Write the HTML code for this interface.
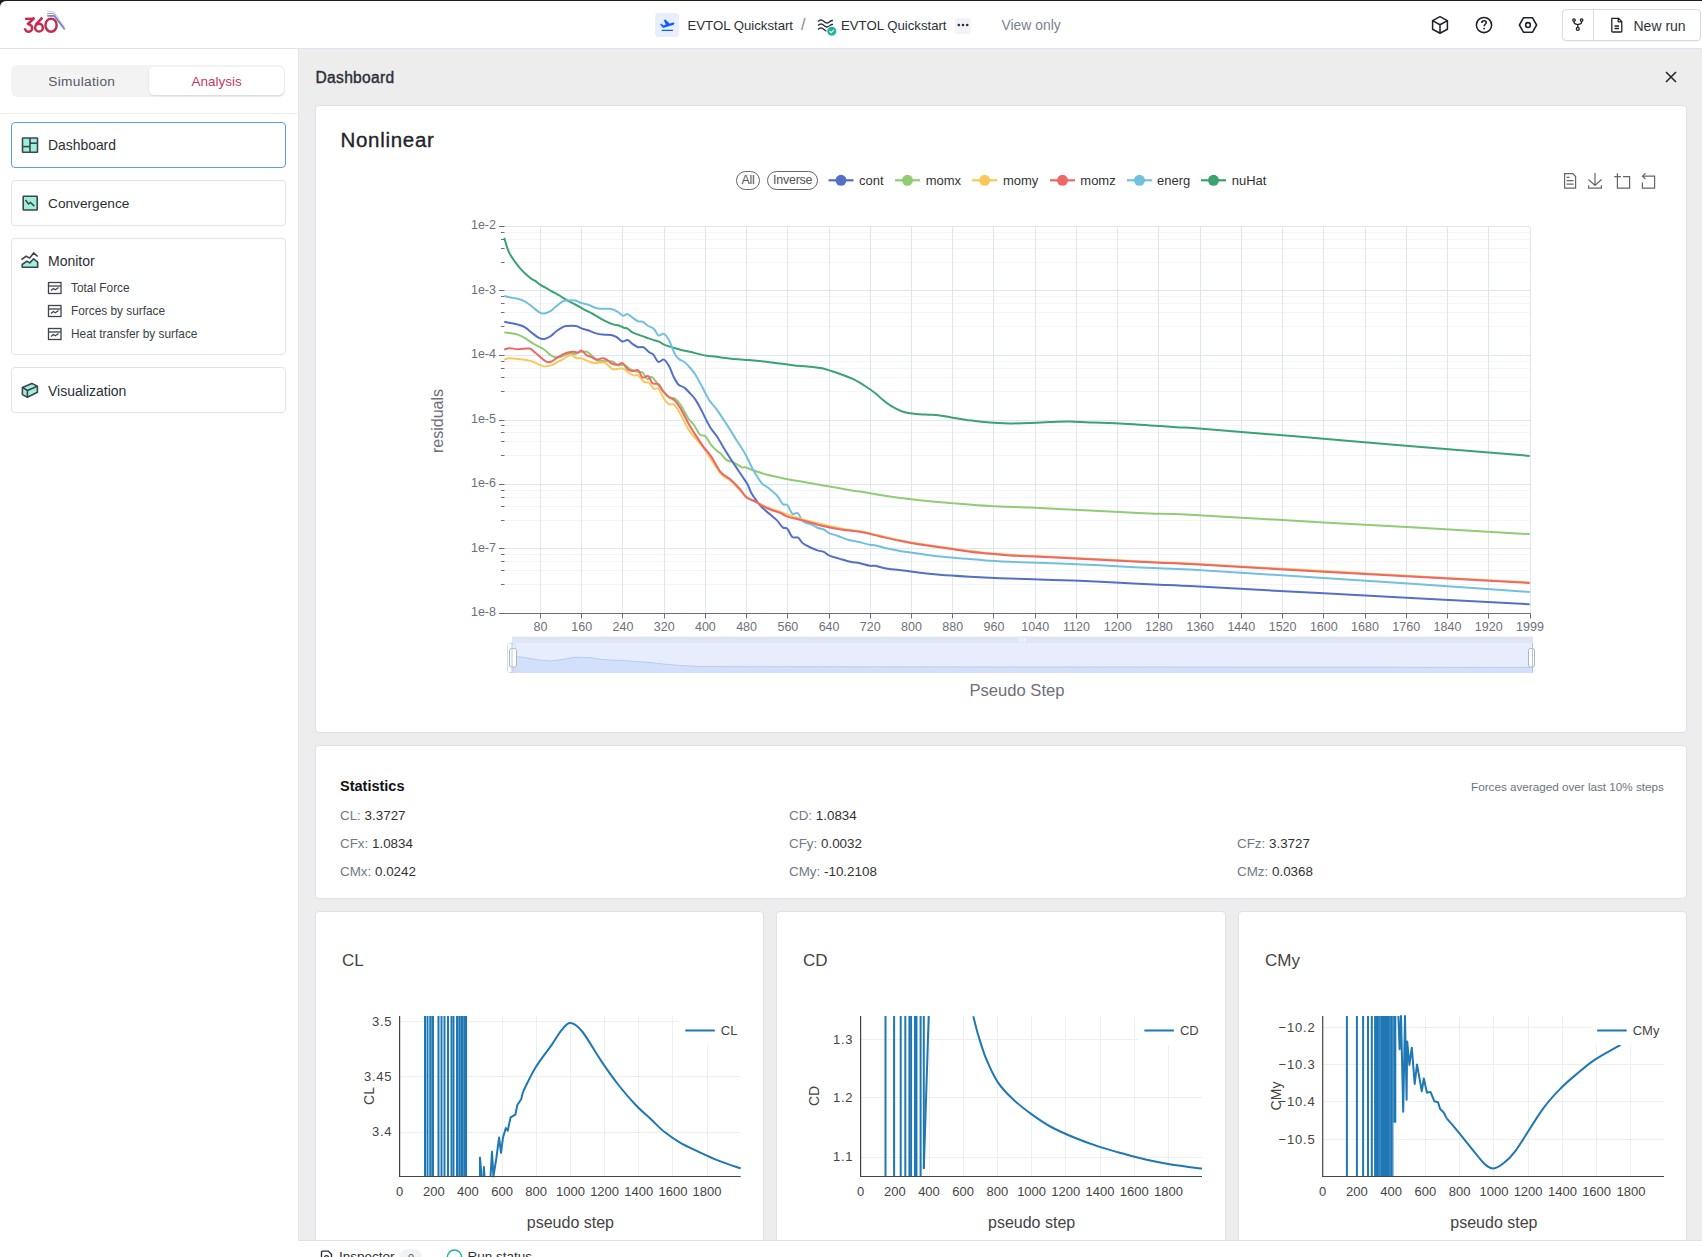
<!DOCTYPE html>
<html><head><meta charset="utf-8">
<style>
*{box-sizing:border-box;margin:0;padding:0}
html,body{width:1702px;height:1257px;overflow:hidden;background:#fff;font-family:"Liberation Sans",sans-serif;color:#2b2f36}
.a{position:absolute}
.t{position:absolute;white-space:nowrap;line-height:1}
svg{position:absolute;overflow:visible}
.card{position:absolute;background:#fff;border:1px solid #dfe1e8;border-radius:4px}
.nav{position:absolute;left:11px;width:275px;background:#fff;border:1px solid #e1e3ea;border-radius:4px}
</style></head><body>
<!-- window frame top -->
<div class="a" style="left:0;top:0;width:1702px;height:8px;background:#1e1e1e"></div>
<div class="a" style="left:0;top:1px;width:1702px;height:48px;background:#fff;border-top-left-radius:6px;border-bottom:1px solid #e2e4ea"></div>

<!-- logo -->
<svg style="left:0;top:0" width="80" height="48" viewBox="0 0 80 48">
 <g fill="none" stroke="#c62b50">
  <path d="M25.1,18.8 L34.3,18.8" stroke-width="2.4"/>
  <path d="M34.4,17.7 L27.2,24.8" stroke-width="2.6"/>
  <path d="M28.8,24.5 A3.6,3.6 0 1 1 25.0,28.3" stroke-width="2.5"/>
  <circle cx="39" cy="27.7" r="3.85" stroke-width="2.5"/>
  <path d="M42.3,17.6 L35.7,24.9" stroke-width="2.6"/>
  <ellipse cx="51.05" cy="25.2" rx="5.6" ry="6.55" stroke-width="2.45"/>
 </g>
 <path d="M47.2,11.7 L53.6,11.7 L64.8,27.5" fill="none" stroke="#e7b3c6" stroke-width="0.9"/>
 <path d="M47.2,13.5 L53.6,13.5 L64.6,28.6" fill="none" stroke="#a58fc4" stroke-width="1"/>
 <path d="M47.2,15.9 L54.2,15.9 L64.7,29.6" fill="none" stroke="#6c8bd0" stroke-width="1.6"/>
</svg>

<!-- breadcrumb -->
<div class="a" style="left:655px;top:13px;width:24px;height:24px;background:#e7effd;border-radius:4px"></div>
<svg style="left:655px;top:13px" width="24" height="24" viewBox="0 0 24 24">
 <path d="M5.3,11.4 L6.4,10.9 L8.3,12.5 L11.1,11.7 L9.0,7.2 L10.4,6.8 L14.6,10.7 L17.8,9.8 C18.9,9.6 19.5,10.3 19.0,11.0 C18.7,11.6 17.9,11.9 17.2,12.1 L8.1,14.7 Z" fill="#0f5bff" stroke="#0f5bff" stroke-width="0.4" stroke-linejoin="round"/>
 <path d="M7.2,17.4 L17.4,17.4" stroke="#0f5bff" stroke-width="1.4" stroke-linecap="round"/>
</svg>
<div class="t" style="left:687.5px;top:18.7px;font-size:13.2px;color:#2b2f36">EVTOL Quickstart</div>
<div class="t" style="left:801px;top:17px;font-size:16px;color:#7f8796">/</div>
<svg style="left:815px;top:14px" width="26" height="26" viewBox="0 0 26 26">
 <path d="M3,7.5 C5,5.5 7,5.5 9,7.5 C11,9.5 13,9.5 15,7.5 C16,6.5 17,6.3 18,6.5" fill="none" stroke="#2b2f36" stroke-width="1.4"/>
 <path d="M3,11.5 C5,9.5 7,9.5 9,11.5 C11,13.5 13,13.5 15,11.5 C16,10.5 17,10.3 18,10.5" fill="none" stroke="#2b2f36" stroke-width="1.4"/>
 <path d="M3,15.5 C5,13.5 7,13.5 9,15.5 C10,16.5 11,17 12,17" fill="none" stroke="#2b2f36" stroke-width="1.4"/>
 <circle cx="16.8" cy="17.2" r="5" fill="#1fb39b" stroke="#fff" stroke-width="1"/>
 <path d="M14.6,17.2 L16.2,18.7 L19,15.8" fill="none" stroke="#fff" stroke-width="1.1"/>
</svg>
<div class="t" style="left:841px;top:18.7px;font-size:13.2px;color:#2b2f36">EVTOL Quickstart</div>
<div class="a" style="left:955px;top:17.5px;width:16px;height:16px;background:#f2f3f5;border-radius:3px"></div>
<svg style="left:955px;top:17px" width="16" height="16" viewBox="0 0 16 16">
 <circle cx="3.8" cy="8" r="1.3" fill="#2b2f36"/><circle cx="8" cy="8" r="1.3" fill="#2b2f36"/><circle cx="12.2" cy="8" r="1.3" fill="#2b2f36"/>
</svg>
<div class="t" style="left:1001.5px;top:19px;font-size:13.9px;color:#7b8190">View only</div>

<!-- top right icons -->
<svg style="left:1420px;top:8px" width="130" height="34" viewBox="1420 8 130 34">
 <g fill="none" stroke="#1f2329" stroke-width="1.55" stroke-linejoin="round">
  <path d="M1440,16.6 L1447.4,20.6 L1447.4,29.3 L1440,33.3 L1432.6,29.3 L1432.6,20.6 Z M1432.6,20.6 L1440,24.7 L1447.4,20.6 M1440,24.7 L1440,33.3"/>
  <circle cx="1484" cy="25" r="7.6"/>
  <path d="M1481.8,22.9 C1481.8,21.5 1482.8,20.8 1484,20.8 C1485.3,20.8 1486.2,21.6 1486.2,22.7 C1486.2,24.2 1484.1,24.3 1484.1,26.3"/>
  <path d="M1523.6,17.7 L1532.4,17.7 L1536.6,25 L1532.4,32.3 L1523.6,32.3 L1519.4,25 Z"/>
  <circle cx="1528" cy="25" r="2.4"/>
 </g>
 <circle cx="1484.1" cy="28.6" r="0.95" fill="#1f2329"/>
</svg>
<div class="a" style="left:1562px;top:9px;width:139px;height:32px;border:1px solid #dadada;border-radius:4px;background:#fff;box-shadow:0 1px 1px rgba(0,0,0,0.04)"></div>
<div class="a" style="left:1593px;top:10px;width:1px;height:30px;background:#dedede"></div>
<svg style="left:1566px;top:14px" width="24" height="22" viewBox="1566 14 24 22">
 <g fill="none" stroke="#1f2329" stroke-width="1.3">
  <circle cx="1574" cy="20.1" r="1.25"/>
  <circle cx="1581.6" cy="20.1" r="1.25"/>
  <circle cx="1577.8" cy="28.9" r="1.45"/>
  <path d="M1574,21.4 L1574,22.3 C1574,23.6 1575,24.2 1577.8,24.7 C1580.6,24.2 1581.6,23.6 1581.6,22.3 L1581.6,21.4 M1577.8,24.7 L1577.8,27.4"/>
 </g>
</svg>
<svg style="left:1607px;top:15px" width="20" height="20" viewBox="0 0 20 20">
 <path d="M4.8,3.3 L11.5,3.3 L14.8,6.6 L14.8,16.2 C14.8,16.7 14.4,17 13.9,17 L5.7,17 C5.2,17 4.8,16.7 4.8,16.2 Z M11.2,3.5 L11.2,6.8 L14.6,6.8 M7.5,11 L12,11 M7.5,13.5 L12,13.5" fill="none" stroke="#1f2329" stroke-width="1.3" stroke-linejoin="round"/>
</svg>
<div class="t" style="left:1633.5px;top:18.5px;font-size:14px;color:#2f3338">New run</div>

<!-- sidebar -->
<div class="a" style="left:0;top:49px;width:299px;height:1208px;background:#fff;border-right:1px solid #e2e4ea"></div>
<div class="a" style="left:11px;top:65px;width:274px;height:32px;background:#f3f3f3;border-radius:6px"></div>
<div class="a" style="left:149px;top:67px;width:135px;height:28px;background:#fff;border-radius:5px;box-shadow:0 1px 2px rgba(0,0,0,0.12)"></div>
<div class="t" style="left:48.3px;top:74.5px;font-size:13.7px;letter-spacing:0.3px;color:#555a63">Simulation</div>
<div class="t" style="left:191.5px;top:75px;font-size:13.5px;color:#c23a62">Analysis</div>
<div class="a" style="left:0;top:113px;width:298px;height:1px;background:#ececec"></div>

<div class="nav" style="top:122px;height:46px;border-color:#5f9bf2"></div>
<div class="nav" style="top:180px;height:46px"></div>
<div class="nav" style="top:238px;height:117px"></div>
<div class="nav" style="top:367px;height:46px"></div>

<svg style="left:0;top:120px" width="60" height="300" viewBox="0 120 60 300">
 <!-- dashboard icon -->
 <rect x="22.5" y="138" width="15" height="14.3" fill="#9cf0dc" stroke="#3f444d" stroke-width="1.6" rx="0.5"/>
 <line x1="30" y1="138" x2="30" y2="152.3" stroke="#3f444d" stroke-width="1.6"/>
 <line x1="22.5" y1="146.6" x2="30" y2="146.6" stroke="#3f444d" stroke-width="1.6"/>
 <line x1="30" y1="143.2" x2="37.5" y2="143.2" stroke="#3f444d" stroke-width="1.6"/>
 <!-- convergence icon -->
 <rect x="23.2" y="196.2" width="14" height="13.8" fill="#9cf0dc" stroke="#3f444d" stroke-width="1.6" rx="0.5"/>
 <path d="M25.5,200 L28.5,204 L30.5,202.4 L34.3,206.1" fill="none" stroke="#3f444d" stroke-width="1.5"/>
 <!-- monitor icon -->
 <path d="M22.2,267.3 L22.2,264.5 L26.9,261.2 L29.7,262.9 L33.7,258.8 L37.7,262.1 L37.7,267.3 Z" fill="#9cf0dc" stroke="#3f444d" stroke-width="1.6" stroke-linejoin="round"/>
 <path d="M21.4,259.7 L26.1,256.3 L29.7,258.1 L33.7,253 L37.7,256.5" fill="none" stroke="#3f444d" stroke-width="1.6" stroke-linejoin="miter"/>
 <!-- sub icons -->
 <g fill="none" stroke="#3f444d" stroke-width="1.3">
  <rect x="48.5" y="282.5" width="12.5" height="11"/><line x1="48.5" y1="286" x2="61" y2="286"/><path d="M51,290.5 L53.3,288.5 L55.3,289.8 L58.5,287.5"/>
  <rect x="48.5" y="305.5" width="12.5" height="11"/><line x1="48.5" y1="309" x2="61" y2="309"/><path d="M51,313.5 L53.3,311.5 L55.3,312.8 L58.5,310.5"/>
  <rect x="48.5" y="328.5" width="12.5" height="11"/><line x1="48.5" y1="332" x2="61" y2="332"/><path d="M51,336.5 L53.3,334.5 L55.3,335.8 L58.5,333.5"/>
 </g>
 <!-- visualization icon -->
 <path d="M22.4,387.4 L31.9,383.4 L37.4,386.2 L37.4,392.2 L27.4,397.2 L22.4,394.6 Z" fill="#9cf0dc" stroke="#3f444d" stroke-width="1.6" stroke-linejoin="round"/>
 <path d="M22.4,387.4 L27.4,390.5 L37.4,386.2 M27.4,390.5 L27.4,397.2" fill="none" stroke="#3f444d" stroke-width="1.6" stroke-linejoin="round"/>
</svg>
<div class="t" style="left:48px;top:138.5px;font-size:13.9px;color:#2b2f36">Dashboard</div>
<div class="t" style="left:48px;top:196.5px;font-size:13.7px;color:#2b2f36">Convergence</div>
<div class="t" style="left:48px;top:253.5px;font-size:14px;color:#2b2f36">Monitor</div>
<div class="t" style="left:71px;top:283px;font-size:11.85px;color:#3a3f47">Total Force</div>
<div class="t" style="left:71px;top:306px;font-size:11.85px;color:#3a3f47">Forces by surface</div>
<div class="t" style="left:71px;top:329px;font-size:11.85px;color:#3a3f47">Heat transfer by surface</div>
<div class="t" style="left:48px;top:383.5px;font-size:14px;color:#2b2f36">Visualization</div>

<!-- main -->
<div class="a" style="left:299px;top:49px;width:1403px;height:1208px;background:#ededed"></div>
<div class="t" style="left:315.5px;top:70px;font-size:15.6px;letter-spacing:0.3px;-webkit-text-stroke:0.4px #2b2f36;color:#2b2f36">Dashboard</div>
<svg style="left:1660px;top:66px" width="22" height="22" viewBox="0 0 22 22">
 <path d="M6,6 L16,16 M16,6 L6,16" stroke="#1f2329" stroke-width="1.5"/>
</svg>

<div class="card" style="left:315px;top:105px;width:1372px;height:628px"></div>
<div class="t" style="left:340.5px;top:129.5px;font-size:20.5px;letter-spacing:0.7px;-webkit-text-stroke:0.35px #1f2329;color:#1f2329">Nonlinear</div>

<!-- legend -->
<div class="a" style="left:736px;top:171px;width:24px;height:19px;border:1px solid #666;border-radius:10px"></div>
<div class="t" style="left:741.5px;top:173.5px;font-size:12.5px;color:#555;letter-spacing:-0.3px">All</div>
<div class="a" style="left:767px;top:171px;width:51px;height:19px;border:1px solid #666;border-radius:10px"></div>
<div class="t" style="left:773px;top:173.5px;font-size:12.5px;color:#555;letter-spacing:-0.25px">Inverse</div>
<svg style="left:820px;top:170px" width="460" height="20" viewBox="820 170 460 20">
 <g stroke-width="2.2">
  <line x1="828.5" y1="180.3" x2="853.5" y2="180.3" stroke="#5470c6"/><circle cx="841" cy="180.3" r="5.5" fill="#5470c6" stroke="none"/>
  <line x1="895" y1="180.3" x2="920" y2="180.3" stroke="#91cc75"/><circle cx="907.5" cy="180.3" r="5.5" fill="#91cc75" stroke="none"/>
  <line x1="972.2" y1="180.3" x2="997.2" y2="180.3" stroke="#fac858"/><circle cx="984.7" cy="180.3" r="5.5" fill="#fac858" stroke="none"/>
  <line x1="1050" y1="180.3" x2="1075" y2="180.3" stroke="#ee6666"/><circle cx="1062.5" cy="180.3" r="5.5" fill="#ee6666" stroke="none"/>
  <line x1="1127" y1="180.3" x2="1152" y2="180.3" stroke="#73c0de"/><circle cx="1139.5" cy="180.3" r="5.5" fill="#73c0de" stroke="none"/>
  <line x1="1201" y1="180.3" x2="1226" y2="180.3" stroke="#3ba272"/><circle cx="1213.5" cy="180.3" r="5.5" fill="#3ba272" stroke="none"/>
 </g>
 <g font-size="13" fill="#333" font-family="Liberation Sans">
  <text x="859" y="184.5">cont</text>
  <text x="925.7" y="184.5">momx</text>
  <text x="1002.9" y="184.5">momy</text>
  <text x="1080.3" y="184.5">momz</text>
  <text x="1157" y="184.5">energ</text>
  <text x="1231.7" y="184.5">nuHat</text>
 </g>
</svg>
<!-- toolbox -->
<svg style="left:1556px;top:166px" width="110" height="30" viewBox="1556 166 110 30">
 <g fill="none" stroke="#666" stroke-width="1.2">
  <path d="M1564.6,173.6 L1572.8,173.6 L1575.6,176.6 L1575.6,188.2 L1564.6,188.2 Z"/>
  <path d="M1566.6,177.4 L1569.6,177.4 M1566.6,180.7 L1573.6,180.7 M1566.6,184.2 L1573.6,184.2" stroke-width="1.3"/>
  <path d="M1595,173 L1595,185.5 M1588.5,179.5 L1595,185.5 L1601.5,179.5 M1588.6,185.2 L1588.6,188.2 L1601.4,188.2 L1601.4,185.2"/>
  <path d="M1614.2,176.6 L1621,176.6 M1617.4,173.3 L1617.4,188.2 L1629.6,188.2 L1629.6,176.6 L1623,176.6"/>
  <path d="M1645.5,173.2 L1642.5,176.2 L1645.5,179.2 M1642.5,176.2 L1654.6,176.2 L1654.6,188.2 L1642.4,188.2 L1642.4,182.4"/>
 </g>
</svg>

<svg style="left:0;top:0" width="1702" height="1257" viewBox="0 0 1702 1257" font-family="Liberation Sans">
<line x1="499" y1="262.5" x2="1530" y2="262.5" stroke="#f3f5fa" stroke-width="1"/>
<line x1="499" y1="248.5" x2="1530" y2="248.5" stroke="#f3f5fa" stroke-width="1"/>
<line x1="499" y1="239.5" x2="1530" y2="239.5" stroke="#f3f5fa" stroke-width="1"/>
<line x1="499" y1="232.5" x2="1530" y2="232.5" stroke="#f3f5fa" stroke-width="1"/>
<line x1="499" y1="326.5" x2="1530" y2="326.5" stroke="#f3f5fa" stroke-width="1"/>
<line x1="499" y1="312.5" x2="1530" y2="312.5" stroke="#f3f5fa" stroke-width="1"/>
<line x1="499" y1="303.5" x2="1530" y2="303.5" stroke="#f3f5fa" stroke-width="1"/>
<line x1="499" y1="296.5" x2="1530" y2="296.5" stroke="#f3f5fa" stroke-width="1"/>
<line x1="499" y1="391.5" x2="1530" y2="391.5" stroke="#f3f5fa" stroke-width="1"/>
<line x1="499" y1="377.5" x2="1530" y2="377.5" stroke="#f3f5fa" stroke-width="1"/>
<line x1="499" y1="368.5" x2="1530" y2="368.5" stroke="#f3f5fa" stroke-width="1"/>
<line x1="499" y1="361.5" x2="1530" y2="361.5" stroke="#f3f5fa" stroke-width="1"/>
<line x1="499" y1="455.5" x2="1530" y2="455.5" stroke="#f3f5fa" stroke-width="1"/>
<line x1="499" y1="441.5" x2="1530" y2="441.5" stroke="#f3f5fa" stroke-width="1"/>
<line x1="499" y1="432.5" x2="1530" y2="432.5" stroke="#f3f5fa" stroke-width="1"/>
<line x1="499" y1="425.5" x2="1530" y2="425.5" stroke="#f3f5fa" stroke-width="1"/>
<line x1="499" y1="520.5" x2="1530" y2="520.5" stroke="#f3f5fa" stroke-width="1"/>
<line x1="499" y1="506.5" x2="1530" y2="506.5" stroke="#f3f5fa" stroke-width="1"/>
<line x1="499" y1="497.5" x2="1530" y2="497.5" stroke="#f3f5fa" stroke-width="1"/>
<line x1="499" y1="490.5" x2="1530" y2="490.5" stroke="#f3f5fa" stroke-width="1"/>
<line x1="499" y1="584.5" x2="1530" y2="584.5" stroke="#f3f5fa" stroke-width="1"/>
<line x1="499" y1="570.5" x2="1530" y2="570.5" stroke="#f3f5fa" stroke-width="1"/>
<line x1="499" y1="561.5" x2="1530" y2="561.5" stroke="#f3f5fa" stroke-width="1"/>
<line x1="499" y1="554.5" x2="1530" y2="554.5" stroke="#f3f5fa" stroke-width="1"/>
<line x1="499" y1="226.5" x2="1530" y2="226.5" stroke="#e0e6f1" stroke-width="1"/>
<line x1="499" y1="290.5" x2="1530" y2="290.5" stroke="#e0e6f1" stroke-width="1"/>
<line x1="499" y1="355.5" x2="1530" y2="355.5" stroke="#e0e6f1" stroke-width="1"/>
<line x1="499" y1="420.5" x2="1530" y2="420.5" stroke="#e0e6f1" stroke-width="1"/>
<line x1="499" y1="484.5" x2="1530" y2="484.5" stroke="#e0e6f1" stroke-width="1"/>
<line x1="499" y1="548.5" x2="1530" y2="548.5" stroke="#e0e6f1" stroke-width="1"/>
<line x1="499" y1="613.5" x2="1530" y2="613.5" stroke="#e0e6f1" stroke-width="1"/>
<line x1="540.5" y1="226.5" x2="540.5" y2="613" stroke="#e0e6f1" stroke-width="1"/>
<line x1="581.5" y1="226.5" x2="581.5" y2="613" stroke="#e0e6f1" stroke-width="1"/>
<line x1="622.5" y1="226.5" x2="622.5" y2="613" stroke="#e0e6f1" stroke-width="1"/>
<line x1="664.5" y1="226.5" x2="664.5" y2="613" stroke="#e0e6f1" stroke-width="1"/>
<line x1="705.5" y1="226.5" x2="705.5" y2="613" stroke="#e0e6f1" stroke-width="1"/>
<line x1="746.5" y1="226.5" x2="746.5" y2="613" stroke="#e0e6f1" stroke-width="1"/>
<line x1="787.5" y1="226.5" x2="787.5" y2="613" stroke="#e0e6f1" stroke-width="1"/>
<line x1="829.5" y1="226.5" x2="829.5" y2="613" stroke="#e0e6f1" stroke-width="1"/>
<line x1="870.5" y1="226.5" x2="870.5" y2="613" stroke="#e0e6f1" stroke-width="1"/>
<line x1="911.5" y1="226.5" x2="911.5" y2="613" stroke="#e0e6f1" stroke-width="1"/>
<line x1="952.5" y1="226.5" x2="952.5" y2="613" stroke="#e0e6f1" stroke-width="1"/>
<line x1="993.5" y1="226.5" x2="993.5" y2="613" stroke="#e0e6f1" stroke-width="1"/>
<line x1="1035.5" y1="226.5" x2="1035.5" y2="613" stroke="#e0e6f1" stroke-width="1"/>
<line x1="1076.5" y1="226.5" x2="1076.5" y2="613" stroke="#e0e6f1" stroke-width="1"/>
<line x1="1117.5" y1="226.5" x2="1117.5" y2="613" stroke="#e0e6f1" stroke-width="1"/>
<line x1="1158.5" y1="226.5" x2="1158.5" y2="613" stroke="#e0e6f1" stroke-width="1"/>
<line x1="1200.5" y1="226.5" x2="1200.5" y2="613" stroke="#e0e6f1" stroke-width="1"/>
<line x1="1241.5" y1="226.5" x2="1241.5" y2="613" stroke="#e0e6f1" stroke-width="1"/>
<line x1="1282.5" y1="226.5" x2="1282.5" y2="613" stroke="#e0e6f1" stroke-width="1"/>
<line x1="1323.5" y1="226.5" x2="1323.5" y2="613" stroke="#e0e6f1" stroke-width="1"/>
<line x1="1365.5" y1="226.5" x2="1365.5" y2="613" stroke="#e0e6f1" stroke-width="1"/>
<line x1="1406.5" y1="226.5" x2="1406.5" y2="613" stroke="#e0e6f1" stroke-width="1"/>
<line x1="1447.5" y1="226.5" x2="1447.5" y2="613" stroke="#e0e6f1" stroke-width="1"/>
<line x1="1488.5" y1="226.5" x2="1488.5" y2="613" stroke="#e0e6f1" stroke-width="1"/>
<line x1="1530.5" y1="226.5" x2="1530.5" y2="613" stroke="#e0e6f1" stroke-width="1"/>
<line x1="499" y1="226.5" x2="504.5" y2="226.5" stroke="#6e7079" stroke-width="1"/>
<line x1="501" y1="262.5" x2="504.5" y2="262.5" stroke="#6e7079" stroke-width="1"/>
<line x1="501" y1="248.5" x2="504.5" y2="248.5" stroke="#6e7079" stroke-width="1"/>
<line x1="501" y1="239.5" x2="504.5" y2="239.5" stroke="#6e7079" stroke-width="1"/>
<line x1="501" y1="232.5" x2="504.5" y2="232.5" stroke="#6e7079" stroke-width="1"/>
<text x="496" y="229.1" text-anchor="end" font-size="12.5" fill="#6e7079">1e-2</text>
<line x1="499" y1="290.5" x2="504.5" y2="290.5" stroke="#6e7079" stroke-width="1"/>
<line x1="501" y1="326.5" x2="504.5" y2="326.5" stroke="#6e7079" stroke-width="1"/>
<line x1="501" y1="312.5" x2="504.5" y2="312.5" stroke="#6e7079" stroke-width="1"/>
<line x1="501" y1="303.5" x2="504.5" y2="303.5" stroke="#6e7079" stroke-width="1"/>
<line x1="501" y1="296.5" x2="504.5" y2="296.5" stroke="#6e7079" stroke-width="1"/>
<text x="496" y="293.6" text-anchor="end" font-size="12.5" fill="#6e7079">1e-3</text>
<line x1="499" y1="355.5" x2="504.5" y2="355.5" stroke="#6e7079" stroke-width="1"/>
<line x1="501" y1="391.5" x2="504.5" y2="391.5" stroke="#6e7079" stroke-width="1"/>
<line x1="501" y1="377.5" x2="504.5" y2="377.5" stroke="#6e7079" stroke-width="1"/>
<line x1="501" y1="368.5" x2="504.5" y2="368.5" stroke="#6e7079" stroke-width="1"/>
<line x1="501" y1="361.5" x2="504.5" y2="361.5" stroke="#6e7079" stroke-width="1"/>
<text x="496" y="358.1" text-anchor="end" font-size="12.5" fill="#6e7079">1e-4</text>
<line x1="499" y1="420.5" x2="504.5" y2="420.5" stroke="#6e7079" stroke-width="1"/>
<line x1="501" y1="455.5" x2="504.5" y2="455.5" stroke="#6e7079" stroke-width="1"/>
<line x1="501" y1="441.5" x2="504.5" y2="441.5" stroke="#6e7079" stroke-width="1"/>
<line x1="501" y1="432.5" x2="504.5" y2="432.5" stroke="#6e7079" stroke-width="1"/>
<line x1="501" y1="425.5" x2="504.5" y2="425.5" stroke="#6e7079" stroke-width="1"/>
<text x="496" y="422.6" text-anchor="end" font-size="12.5" fill="#6e7079">1e-5</text>
<line x1="499" y1="484.5" x2="504.5" y2="484.5" stroke="#6e7079" stroke-width="1"/>
<line x1="501" y1="520.5" x2="504.5" y2="520.5" stroke="#6e7079" stroke-width="1"/>
<line x1="501" y1="506.5" x2="504.5" y2="506.5" stroke="#6e7079" stroke-width="1"/>
<line x1="501" y1="497.5" x2="504.5" y2="497.5" stroke="#6e7079" stroke-width="1"/>
<line x1="501" y1="490.5" x2="504.5" y2="490.5" stroke="#6e7079" stroke-width="1"/>
<text x="496" y="487.1" text-anchor="end" font-size="12.5" fill="#6e7079">1e-6</text>
<line x1="499" y1="548.5" x2="504.5" y2="548.5" stroke="#6e7079" stroke-width="1"/>
<line x1="501" y1="584.5" x2="504.5" y2="584.5" stroke="#6e7079" stroke-width="1"/>
<line x1="501" y1="570.5" x2="504.5" y2="570.5" stroke="#6e7079" stroke-width="1"/>
<line x1="501" y1="561.5" x2="504.5" y2="561.5" stroke="#6e7079" stroke-width="1"/>
<line x1="501" y1="554.5" x2="504.5" y2="554.5" stroke="#6e7079" stroke-width="1"/>
<text x="496" y="551.6" text-anchor="end" font-size="12.5" fill="#6e7079">1e-7</text>
<line x1="499" y1="613.5" x2="504.5" y2="613.5" stroke="#6e7079" stroke-width="1"/>
<text x="496" y="616.1" text-anchor="end" font-size="12.5" fill="#6e7079">1e-8</text>
<line x1="499" y1="613.5" x2="1530.5" y2="613.5" stroke="#6e7079" stroke-width="1"/>
<line x1="540.5" y1="613.5" x2="540.5" y2="618.5" stroke="#6e7079" stroke-width="1"/>
<text x="540.5" y="630.8" text-anchor="middle" font-size="12.5" fill="#6e7079">80</text>
<line x1="581.5" y1="613.5" x2="581.5" y2="618.5" stroke="#6e7079" stroke-width="1"/>
<text x="581.7" y="630.8" text-anchor="middle" font-size="12.5" fill="#6e7079">160</text>
<line x1="622.5" y1="613.5" x2="622.5" y2="618.5" stroke="#6e7079" stroke-width="1"/>
<text x="623.0" y="630.8" text-anchor="middle" font-size="12.5" fill="#6e7079">240</text>
<line x1="664.5" y1="613.5" x2="664.5" y2="618.5" stroke="#6e7079" stroke-width="1"/>
<text x="664.2" y="630.8" text-anchor="middle" font-size="12.5" fill="#6e7079">320</text>
<line x1="705.5" y1="613.5" x2="705.5" y2="618.5" stroke="#6e7079" stroke-width="1"/>
<text x="705.4" y="630.8" text-anchor="middle" font-size="12.5" fill="#6e7079">400</text>
<line x1="746.5" y1="613.5" x2="746.5" y2="618.5" stroke="#6e7079" stroke-width="1"/>
<text x="746.6" y="630.8" text-anchor="middle" font-size="12.5" fill="#6e7079">480</text>
<line x1="787.5" y1="613.5" x2="787.5" y2="618.5" stroke="#6e7079" stroke-width="1"/>
<text x="787.9" y="630.8" text-anchor="middle" font-size="12.5" fill="#6e7079">560</text>
<line x1="829.5" y1="613.5" x2="829.5" y2="618.5" stroke="#6e7079" stroke-width="1"/>
<text x="829.1" y="630.8" text-anchor="middle" font-size="12.5" fill="#6e7079">640</text>
<line x1="870.5" y1="613.5" x2="870.5" y2="618.5" stroke="#6e7079" stroke-width="1"/>
<text x="870.3" y="630.8" text-anchor="middle" font-size="12.5" fill="#6e7079">720</text>
<line x1="911.5" y1="613.5" x2="911.5" y2="618.5" stroke="#6e7079" stroke-width="1"/>
<text x="911.5" y="630.8" text-anchor="middle" font-size="12.5" fill="#6e7079">800</text>
<line x1="952.5" y1="613.5" x2="952.5" y2="618.5" stroke="#6e7079" stroke-width="1"/>
<text x="952.8" y="630.8" text-anchor="middle" font-size="12.5" fill="#6e7079">880</text>
<line x1="993.5" y1="613.5" x2="993.5" y2="618.5" stroke="#6e7079" stroke-width="1"/>
<text x="994.0" y="630.8" text-anchor="middle" font-size="12.5" fill="#6e7079">960</text>
<line x1="1035.5" y1="613.5" x2="1035.5" y2="618.5" stroke="#6e7079" stroke-width="1"/>
<text x="1035.2" y="630.8" text-anchor="middle" font-size="12.5" fill="#6e7079">1040</text>
<line x1="1076.5" y1="613.5" x2="1076.5" y2="618.5" stroke="#6e7079" stroke-width="1"/>
<text x="1076.4" y="630.8" text-anchor="middle" font-size="12.5" fill="#6e7079">1120</text>
<line x1="1117.5" y1="613.5" x2="1117.5" y2="618.5" stroke="#6e7079" stroke-width="1"/>
<text x="1117.7" y="630.8" text-anchor="middle" font-size="12.5" fill="#6e7079">1200</text>
<line x1="1158.5" y1="613.5" x2="1158.5" y2="618.5" stroke="#6e7079" stroke-width="1"/>
<text x="1158.9" y="630.8" text-anchor="middle" font-size="12.5" fill="#6e7079">1280</text>
<line x1="1200.5" y1="613.5" x2="1200.5" y2="618.5" stroke="#6e7079" stroke-width="1"/>
<text x="1200.1" y="630.8" text-anchor="middle" font-size="12.5" fill="#6e7079">1360</text>
<line x1="1241.5" y1="613.5" x2="1241.5" y2="618.5" stroke="#6e7079" stroke-width="1"/>
<text x="1241.3" y="630.8" text-anchor="middle" font-size="12.5" fill="#6e7079">1440</text>
<line x1="1282.5" y1="613.5" x2="1282.5" y2="618.5" stroke="#6e7079" stroke-width="1"/>
<text x="1282.6" y="630.8" text-anchor="middle" font-size="12.5" fill="#6e7079">1520</text>
<line x1="1323.5" y1="613.5" x2="1323.5" y2="618.5" stroke="#6e7079" stroke-width="1"/>
<text x="1323.8" y="630.8" text-anchor="middle" font-size="12.5" fill="#6e7079">1600</text>
<line x1="1365.5" y1="613.5" x2="1365.5" y2="618.5" stroke="#6e7079" stroke-width="1"/>
<text x="1365.0" y="630.8" text-anchor="middle" font-size="12.5" fill="#6e7079">1680</text>
<line x1="1406.5" y1="613.5" x2="1406.5" y2="618.5" stroke="#6e7079" stroke-width="1"/>
<text x="1406.2" y="630.8" text-anchor="middle" font-size="12.5" fill="#6e7079">1760</text>
<line x1="1447.5" y1="613.5" x2="1447.5" y2="618.5" stroke="#6e7079" stroke-width="1"/>
<text x="1447.5" y="630.8" text-anchor="middle" font-size="12.5" fill="#6e7079">1840</text>
<line x1="1488.5" y1="613.5" x2="1488.5" y2="618.5" stroke="#6e7079" stroke-width="1"/>
<text x="1488.7" y="630.8" text-anchor="middle" font-size="12.5" fill="#6e7079">1920</text>
<line x1="1530.5" y1="613.5" x2="1530.5" y2="618.5" stroke="#6e7079" stroke-width="1"/>
<text x="1530.0" y="630.8" text-anchor="middle" font-size="12.5" fill="#6e7079">1999</text>
<path d="M504.3,237.9 C505.1,240.4 506.8,248.0 509.3,252.9 C511.8,257.8 515.9,263.2 519.3,267.3 C522.6,271.4 526.8,275.0 529.4,277.3 C532.0,279.6 533.2,279.6 535.1,280.9 C537.0,282.2 539.1,284.1 540.8,285.2 C542.5,286.3 543.4,286.4 545.1,287.3 C546.8,288.2 549.0,289.8 550.9,290.9 C552.8,292.0 554.7,292.7 556.6,293.8 C558.5,294.9 560.1,296.0 562.3,297.3 C564.4,298.6 567.4,300.4 569.5,301.6 C571.6,302.8 573.3,303.5 575.2,304.5 C577.1,305.5 579.0,306.6 580.9,307.7 C582.8,308.8 584.6,309.8 586.7,310.9 C588.9,312.0 591.4,313.2 593.8,314.5 C596.2,315.8 598.6,317.5 601.0,318.8 C603.4,320.1 606.0,321.4 608.1,322.4 C610.2,323.4 612.2,324.1 613.9,324.6 C615.6,325.1 616.5,324.8 618.2,325.3 C619.9,325.8 622.4,327.1 623.9,327.7 C625.4,328.2 626.1,327.8 627.5,328.6 C628.9,329.4 630.7,331.4 632.5,332.4 C634.3,333.4 636.1,333.8 638.2,334.6 C640.4,335.4 643.0,336.4 645.4,337.2 C647.8,338.0 650.2,338.9 652.5,339.6 C654.8,340.4 657.1,340.9 659.0,341.7 C660.9,342.5 661.7,343.6 664.0,344.6 C666.3,345.6 669.7,346.6 672.6,347.5 C675.5,348.4 678.3,349.3 681.2,350.0 C684.1,350.7 686.9,351.2 689.8,351.8 C692.7,352.4 695.5,353.2 698.4,353.9 C701.3,354.6 704.2,355.4 707.0,355.8 C709.8,356.2 712.4,356.1 715.0,356.4 C717.6,356.7 719.0,357.2 722.9,357.7 C726.8,358.2 733.9,358.9 738.2,359.3 C742.5,359.7 744.6,359.6 748.9,360.0 C753.2,360.4 759.1,361.0 764.2,361.6 C769.3,362.2 774.3,362.8 779.4,363.4 C784.5,364.0 789.1,364.8 794.7,365.4 C800.3,366.0 808.4,366.4 813.0,366.9 C817.6,367.4 819.1,367.6 822.2,368.3 C825.3,369.0 827.8,369.9 831.4,371.0 C835.0,372.1 839.8,373.8 843.6,375.2 C847.4,376.6 850.7,377.9 854.3,379.7 C857.9,381.5 861.4,383.7 865.0,386.0 C868.6,388.3 872.9,391.3 875.7,393.5 C878.5,395.7 879.2,396.9 881.8,399.0 C884.3,401.1 887.7,403.9 891.0,405.9 C894.3,407.9 898.1,409.9 901.6,411.2 C905.1,412.5 908.2,412.9 912.3,413.5 C916.4,414.1 921.8,414.3 926.1,414.6 C930.4,414.9 934.2,414.9 938.3,415.3 C942.4,415.8 944.9,416.4 950.5,417.3 C956.1,418.2 965.4,419.7 971.9,420.6 C978.4,421.5 983.5,422.1 989.8,422.6 C996.1,423.1 1002.8,423.3 1009.8,423.4 C1016.8,423.5 1025.1,423.2 1031.8,423.0 C1038.5,422.8 1043.5,422.2 1049.8,422.0 C1056.1,421.8 1063.0,421.5 1069.7,421.6 C1076.4,421.7 1081.4,422.1 1089.7,422.4 C1098.0,422.7 1109.7,423.1 1119.7,423.6 C1129.7,424.1 1139.7,424.8 1149.7,425.4 C1159.7,426.0 1172.9,427.0 1179.6,427.4 C1186.3,427.8 1179.7,427.1 1190.0,427.8 C1200.3,428.6 1219.1,430.1 1241.4,431.9 C1263.7,433.7 1296.3,436.4 1323.7,438.7 C1351.1,441.0 1371.6,442.8 1405.9,445.7 C1440.2,448.6 1509.1,454.2 1529.7,455.9" fill="none" stroke="#3ba272" stroke-width="2" stroke-linejoin="round"/>
<path d="M504.3,332.4 C505.1,332.5 507.0,332.5 509.3,332.9 C511.6,333.3 515.3,333.7 517.9,334.6 C520.5,335.5 522.5,336.6 525.1,338.2 C527.7,339.8 531.3,342.5 533.7,343.9 C536.1,345.3 537.5,345.7 539.4,346.8 C541.3,347.9 543.2,348.9 545.1,350.3 C547.0,351.7 549.2,354.2 550.9,355.3 C552.6,356.4 553.5,356.9 555.2,357.2 C556.9,357.4 559.0,357.2 560.9,356.8 C562.8,356.4 564.9,355.2 566.6,354.6 C568.3,354.1 569.5,353.6 570.9,353.5 C572.3,353.4 573.5,354.2 575.2,353.9 C576.9,353.6 579.0,352.1 580.9,351.8 C582.8,351.5 584.8,351.1 586.7,351.8 C588.6,352.5 590.7,354.7 592.4,356.1 C594.1,357.5 594.8,359.6 596.7,360.4 C598.6,361.2 601.3,360.9 603.9,361.1 C606.5,361.3 610.0,360.8 612.4,361.5 C614.8,362.2 616.3,364.9 618.2,365.4 C620.1,365.9 621.8,364.0 623.9,364.7 C626.0,365.4 628.7,368.5 631.1,369.7 C633.5,370.9 636.3,371.3 638.2,371.8 C640.1,372.3 641.0,371.3 642.5,372.5 C644.0,373.7 645.8,378.2 647.5,379.0 C649.2,379.8 650.2,375.8 652.5,377.5 C654.8,379.2 658.7,386.2 661.5,389.5 C664.3,392.8 666.9,395.7 669.1,397.2 C671.3,398.7 672.9,397.4 674.8,398.7 C676.7,400.0 678.4,401.6 680.6,404.8 C682.8,408.1 686.0,414.9 688.2,418.2 C690.4,421.5 692.0,422.2 693.9,424.9 C695.8,427.6 697.8,432.5 699.7,434.4 C701.6,436.3 703.5,434.6 705.4,436.3 C707.3,438.1 709.2,442.5 711.1,444.9 C713.0,447.3 715.2,449.3 716.8,450.7 C718.4,452.1 719.1,452.0 720.7,453.5 C722.3,455.0 724.2,458.3 726.4,459.8 C728.6,461.3 731.5,461.4 734.0,462.7 C736.5,463.9 739.8,466.5 741.7,467.3 C743.6,468.1 743.6,466.8 745.5,467.3 C747.4,467.8 749.6,469.1 753.1,470.3 C756.6,471.5 761.4,473.1 766.5,474.5 C771.6,475.9 777.7,477.2 783.7,478.4 C789.8,479.6 796.4,480.7 802.8,481.8 C809.2,482.9 815.5,484.1 821.9,485.2 C828.3,486.3 835.3,487.5 841.0,488.5 C846.7,489.5 853.1,490.7 856.3,491.2 C859.5,491.7 856.0,490.9 860.0,491.5 C864.0,492.1 873.3,493.8 880.0,494.9 C886.7,496.0 893.4,497.0 900.0,497.9 C906.6,498.8 911.6,499.5 919.9,500.3 C928.2,501.1 938.2,502.0 949.9,502.9 C961.5,503.8 976.5,505.1 989.8,505.9 C1003.1,506.7 1016.5,506.9 1029.8,507.5 C1043.1,508.1 1056.4,508.8 1069.7,509.5 C1083.0,510.2 1096.4,510.8 1109.7,511.5 C1123.0,512.2 1136.3,513.0 1149.7,513.5 C1163.1,514.0 1161.0,513.2 1190.0,514.7 C1219.0,516.2 1267.1,519.2 1323.7,522.4 C1380.3,525.6 1495.4,532.1 1529.7,534.1" fill="none" stroke="#91cc75" stroke-width="2" stroke-linejoin="round"/>
<path d="M504.3,295.9 C505.1,296.1 507.0,296.8 509.3,297.3 C511.6,297.8 515.3,298.1 517.9,298.8 C520.5,299.5 522.7,300.3 525.1,301.6 C527.5,302.9 529.8,304.9 532.2,306.7 C534.6,308.5 537.4,311.3 539.4,312.4 C541.4,313.5 542.5,313.6 544.4,313.4 C546.3,313.1 548.9,312.1 550.9,310.9 C552.9,309.6 554.7,307.4 556.6,305.9 C558.5,304.3 560.6,302.5 562.3,301.6 C564.0,300.7 564.5,300.7 566.6,300.5 C568.8,300.3 572.8,300.1 575.2,300.5 C577.6,300.9 578.8,302.1 580.9,302.8 C583.0,303.5 585.7,304.0 588.1,304.8 C590.5,305.6 593.1,307.0 595.3,307.7 C597.4,308.4 598.6,308.6 601.0,308.8 C603.4,309.0 607.2,308.5 609.6,308.8 C612.0,309.1 613.6,309.8 615.3,310.5 C617.0,311.2 618.3,312.2 619.6,313.1 C620.9,314.0 621.9,315.5 623.2,315.7 C624.5,315.9 626.0,313.8 627.5,314.1 C629.0,314.4 630.7,316.5 632.5,317.7 C634.3,318.9 636.5,320.7 638.2,321.4 C639.9,322.1 640.8,320.9 642.5,321.7 C644.2,322.5 646.4,324.8 648.3,326.0 C650.2,327.2 652.3,327.3 654.0,328.9 C655.7,330.4 656.6,334.5 658.3,335.3 C660.0,336.1 662.2,333.1 664.0,333.9 C665.8,334.7 667.6,337.8 669.0,340.3 C670.4,342.8 671.5,346.4 672.6,348.9 C673.7,351.4 674.3,353.5 675.5,355.3 C676.7,357.1 678.4,358.5 679.8,359.6 C681.2,360.7 682.4,360.5 684.1,361.8 C685.8,363.1 687.9,365.4 689.8,367.5 C691.7,369.6 693.2,371.0 695.5,374.7 C697.8,378.4 701.2,385.3 703.5,389.5 C705.8,393.7 707.0,396.8 709.2,400.1 C711.4,403.5 713.9,405.6 716.8,409.6 C719.7,413.6 723.2,419.0 726.4,423.9 C729.6,428.8 732.7,434.1 735.9,439.2 C739.1,444.3 742.6,449.4 745.5,454.5 C748.4,459.6 750.4,465.0 753.1,469.8 C755.8,474.6 759.2,480.1 761.7,483.1 C764.2,486.1 765.9,485.8 768.4,487.9 C770.9,490.0 774.6,492.8 777.0,495.5 C779.4,498.2 781.0,502.5 782.7,504.1 C784.5,505.7 785.9,503.5 787.5,505.1 C789.1,506.7 790.5,512.3 792.3,513.7 C794.0,515.1 796.2,512.0 798.0,513.3 C799.8,514.6 800.7,519.5 802.8,521.3 C804.9,523.1 807.8,523.1 810.4,524.2 C813.0,525.3 815.9,527.1 818.1,528.0 C820.3,528.9 821.9,528.6 823.8,529.5 C825.7,530.4 827.3,532.4 829.5,533.4 C831.7,534.4 834.0,534.6 837.2,535.7 C840.4,536.8 845.4,539.0 848.6,540.0 C851.8,541.0 854.4,541.0 856.3,541.4 C858.2,541.8 857.7,541.6 860.0,542.2 C862.3,542.8 867.3,544.3 870.0,544.8 C872.7,545.3 873.3,544.8 876.0,545.4 C878.7,546.0 882.0,547.3 886.0,548.2 C890.0,549.1 894.4,550.1 900.0,551.0 C905.6,551.9 913.2,552.9 919.9,553.8 C926.5,554.7 933.2,555.7 939.9,556.4 C946.6,557.1 951.6,557.5 959.9,558.2 C968.2,558.9 979.8,560.1 989.8,560.8 C999.8,561.5 1008.1,561.8 1019.8,562.2 C1031.5,562.6 1046.5,562.9 1059.8,563.4 C1073.1,563.9 1086.4,564.5 1099.7,565.2 C1113.0,565.9 1124.7,566.7 1139.7,567.4 C1154.8,568.1 1159.3,567.9 1190.0,569.6 C1220.7,571.4 1267.1,574.2 1323.7,577.9 C1380.3,581.6 1495.4,589.6 1529.7,591.9" fill="none" stroke="#73c0de" stroke-width="2" stroke-linejoin="round"/>
<path d="M504.3,321.7 C505.1,321.9 507.0,322.3 509.3,322.8 C511.6,323.3 515.3,323.8 517.9,324.6 C520.5,325.4 522.7,326.0 525.1,327.4 C527.5,328.8 529.8,331.3 532.2,333.1 C534.6,334.9 537.4,337.2 539.4,338.2 C541.4,339.2 542.5,339.3 544.4,338.9 C546.3,338.5 548.9,337.3 550.9,336.0 C552.9,334.7 554.7,332.4 556.6,331.0 C558.5,329.6 560.6,328.2 562.3,327.4 C564.0,326.6 564.3,326.2 566.6,326.0 C568.9,325.8 573.5,325.6 575.9,326.0 C578.3,326.4 578.9,327.4 580.9,328.1 C582.9,328.8 585.7,329.5 588.1,330.3 C590.5,331.1 592.9,332.4 595.3,333.1 C597.7,333.8 599.8,334.3 602.4,334.6 C605.0,334.9 608.6,334.5 611.0,334.9 C613.4,335.3 614.8,336.1 616.7,337.2 C618.6,338.3 620.7,341.0 622.5,341.5 C624.3,342.0 625.8,339.6 627.5,340.0 C629.2,340.4 630.7,342.7 632.5,343.9 C634.3,345.1 636.4,346.6 638.2,347.2 C640.0,347.8 641.4,346.4 643.2,347.2 C645.0,348.0 647.3,350.9 649.0,352.1 C650.7,353.3 651.8,353.0 653.3,354.6 C654.8,356.2 656.5,361.0 658.3,361.8 C660.1,362.6 662.2,358.9 664.0,359.6 C665.8,360.3 667.3,363.1 669.0,366.1 C670.7,369.1 672.4,374.4 674.0,377.5 C675.6,380.6 676.9,383.1 678.6,384.8 C680.3,386.5 682.5,386.2 684.4,387.6 C686.3,389.0 688.2,391.3 690.1,393.4 C692.0,395.5 693.9,397.2 695.8,400.1 C697.7,403.0 699.7,407.0 701.6,410.6 C703.5,414.2 705.7,419.0 707.3,422.0 C708.9,425.0 709.5,426.3 711.1,428.7 C712.7,431.1 714.9,433.4 716.8,436.3 C718.7,439.2 720.4,442.2 722.6,445.9 C724.8,449.6 728.0,454.8 730.2,458.3 C732.4,461.8 734.0,464.0 735.9,466.9 C737.8,469.8 739.8,472.6 741.7,475.5 C743.6,478.4 745.8,481.2 747.4,484.1 C749.0,487.0 749.6,489.8 751.2,492.7 C752.8,495.6 755.1,498.8 757.0,501.3 C758.9,503.9 760.5,505.8 762.7,508.0 C764.9,510.2 767.9,512.5 770.3,514.6 C772.7,516.7 774.9,518.3 777.0,520.4 C779.1,522.5 781.0,526.0 782.7,527.4 C784.5,528.8 785.9,527.4 787.5,529.0 C789.1,530.6 790.5,535.6 792.3,537.0 C794.0,538.4 796.2,536.6 798.0,537.6 C799.8,538.6 800.7,541.6 802.8,543.3 C804.9,544.9 807.8,546.3 810.4,547.5 C813.0,548.7 815.9,549.9 818.1,550.6 C820.3,551.3 821.9,551.0 823.8,551.9 C825.7,552.8 827.0,554.6 829.5,555.7 C832.0,556.8 835.6,557.6 839.1,558.6 C842.6,559.6 847.0,561.0 850.5,561.8 C854.0,562.6 856.8,562.5 860.0,563.2 C863.2,563.9 867.5,565.4 870.0,565.8 C872.5,566.2 872.3,565.4 875.0,565.8 C877.7,566.2 880.9,567.6 886.0,568.4 C891.1,569.2 900.2,570.1 905.9,570.8 C911.5,571.5 914.2,572.1 919.9,572.8 C925.6,573.5 931.6,574.1 939.9,574.8 C948.2,575.5 959.9,576.2 969.9,576.8 C979.9,577.4 988.1,577.8 999.8,578.2 C1011.4,578.6 1026.5,579.0 1039.8,579.4 C1053.1,579.8 1066.4,580.2 1079.7,580.8 C1093.0,581.4 1106.4,582.1 1119.7,582.8 C1133.0,583.5 1147.9,584.2 1159.6,584.8 C1171.3,585.3 1162.7,584.7 1190.0,586.1 C1217.3,587.5 1267.1,590.3 1323.7,593.3 C1380.3,596.3 1495.4,602.4 1529.7,604.2" fill="none" stroke="#5470c6" stroke-width="2" stroke-linejoin="round"/>
<path d="M504.3,359.6 C505.1,359.4 507.0,358.3 509.3,358.2 C511.6,358.1 515.0,358.6 517.9,358.9 C520.8,359.2 523.9,359.6 526.5,360.1 C529.1,360.6 531.6,361.3 533.7,362.1 C535.9,362.9 537.5,364.2 539.4,364.9 C541.3,365.6 543.2,366.3 545.1,366.4 C547.0,366.5 549.0,366.0 550.9,365.4 C552.8,364.8 554.5,363.6 556.6,362.5 C558.7,361.4 561.3,360.2 563.7,358.9 C566.1,357.6 568.8,355.0 570.9,354.9 C573.0,354.8 574.9,357.6 576.6,358.2 C578.3,358.8 579.0,357.7 580.9,358.2 C582.8,358.7 586.0,360.3 588.1,361.1 C590.2,361.9 591.2,362.7 593.8,362.9 C596.4,363.1 601.5,362.1 603.9,362.5 C606.3,362.9 606.7,364.3 608.1,365.4 C609.5,366.5 610.7,368.4 612.4,369.0 C614.1,369.6 616.3,368.8 618.2,368.7 C620.1,368.6 622.2,368.1 623.9,368.7 C625.6,369.3 626.5,371.4 628.2,372.5 C629.9,373.6 632.2,374.9 633.9,375.4 C635.6,375.9 636.5,374.3 638.2,375.4 C639.9,376.5 642.2,380.6 644.0,381.8 C645.8,383.0 647.4,381.5 649.0,382.6 C650.6,383.7 652.2,387.5 653.8,388.6 C655.4,389.7 656.9,387.2 658.6,389.0 C660.4,390.8 662.5,396.5 664.3,399.1 C666.0,401.7 667.5,403.5 669.1,404.4 C670.7,405.3 672.1,403.0 673.9,404.4 C675.6,405.8 677.0,408.1 679.6,412.5 C682.2,416.9 685.2,424.7 689.2,430.6 C693.2,436.5 698.2,440.6 703.5,447.8 C708.8,455.0 716.2,468.2 720.7,473.6 C725.2,479.0 725.9,476.5 730.2,480.3 C734.5,484.1 741.0,492.4 746.4,496.5 C751.8,500.6 757.1,502.6 762.7,505.1 C768.3,507.7 773.2,509.4 779.9,511.8 C786.6,514.2 792.6,516.6 802.8,519.4 C813.0,522.2 831.5,526.6 841.0,528.6 C850.5,530.6 853.5,530.0 860.0,531.2 C866.5,532.4 873.3,534.3 880.0,535.8 C886.7,537.3 893.4,538.9 900.0,540.2 C906.6,541.5 911.6,542.5 919.9,543.8 C928.2,545.1 939.9,546.8 949.9,548.2 C959.9,549.6 969.9,551.1 979.9,552.2 C989.9,553.3 999.8,554.1 1009.8,554.8 C1019.8,555.5 1028.1,555.6 1039.8,556.2 C1051.5,556.8 1066.4,557.5 1079.7,558.2 C1093.0,558.9 1106.4,559.5 1119.7,560.2 C1133.0,560.9 1147.9,561.7 1159.6,562.2 C1171.3,562.8 1162.7,562.0 1190.0,563.5 C1217.3,565.0 1267.1,568.0 1323.7,571.1 C1380.3,574.2 1495.4,580.5 1529.7,582.4" fill="none" stroke="#fac858" stroke-width="2" stroke-linejoin="round"/>
<path d="M504.3,349.6 C505.1,349.4 507.0,348.3 509.3,348.2 C511.6,348.1 514.5,349.1 517.9,349.2 C521.2,349.3 526.5,348.1 529.4,348.6 C532.3,349.2 533.2,351.0 535.1,352.5 C537.0,354.0 538.9,355.9 540.8,357.5 C542.7,359.1 544.9,361.1 546.6,361.8 C548.3,362.5 549.2,362.4 550.9,361.8 C552.6,361.2 554.7,359.4 556.6,358.2 C558.5,357.0 560.4,355.6 562.3,354.6 C564.2,353.7 566.1,353.0 568.0,352.5 C569.9,352.0 572.1,351.8 573.8,351.8 C575.5,351.8 576.8,352.7 578.1,352.5 C579.4,352.3 580.3,350.1 581.7,350.6 C583.1,351.1 585.2,354.3 586.7,355.3 C588.2,356.3 589.3,356.1 591.0,356.8 C592.7,357.5 594.8,359.4 596.7,359.6 C598.6,359.8 600.7,358.2 602.4,358.2 C604.1,358.2 605.0,358.7 606.7,359.6 C608.4,360.6 610.5,363.0 612.4,363.9 C614.3,364.8 616.5,364.8 618.2,364.7 C619.9,364.6 620.8,362.4 622.5,363.2 C624.2,364.0 626.5,368.4 628.2,369.7 C629.9,371.0 630.8,371.0 632.5,371.1 C634.2,371.2 636.5,369.3 638.2,370.4 C639.9,371.5 640.8,376.6 642.5,377.5 C644.2,378.4 646.6,375.1 648.3,376.1 C650.0,377.1 650.8,382.0 652.5,383.3 C654.2,384.6 656.8,382.8 658.6,384.2 C660.4,385.6 661.6,389.3 663.4,391.5 C665.1,393.7 667.2,395.7 669.1,397.2 C671.0,398.7 672.9,398.7 674.8,400.6 C676.7,402.5 678.4,404.9 680.6,408.6 C682.8,412.3 685.7,418.5 688.2,423.0 C690.7,427.5 693.2,431.4 695.8,435.4 C698.3,439.4 701.0,443.3 703.5,446.8 C706.0,450.3 708.2,452.2 711.1,456.4 C714.0,460.6 717.5,468.4 720.7,472.2 C723.9,476.0 727.0,476.5 730.2,479.3 C733.4,482.1 737.1,485.9 739.8,488.9 C742.5,491.9 743.9,495.4 746.4,497.5 C748.9,499.6 752.3,499.9 755.0,501.3 C757.7,502.7 759.8,504.6 762.7,506.1 C765.6,507.6 769.3,509.2 772.2,510.3 C775.1,511.4 777.4,511.7 779.9,512.7 C782.4,513.8 783.7,515.3 787.5,516.6 C791.3,517.9 797.1,518.9 802.8,520.4 C808.5,521.9 815.5,524.2 821.9,525.7 C828.3,527.2 834.6,528.5 841.0,529.5 C847.4,530.5 853.5,530.6 860.0,531.8 C866.5,532.9 873.3,534.9 880.0,536.4 C886.7,537.9 893.4,539.5 900.0,540.8 C906.6,542.1 911.6,543.1 919.9,544.4 C928.2,545.7 939.9,547.4 949.9,548.8 C959.9,550.2 969.9,551.7 979.9,552.8 C989.9,553.9 999.8,554.7 1009.8,555.4 C1019.8,556.1 1028.1,556.2 1039.8,556.8 C1051.5,557.4 1066.4,558.1 1079.7,558.8 C1093.0,559.5 1106.4,560.1 1119.7,560.8 C1133.0,561.5 1147.9,562.2 1159.6,562.8 C1171.3,563.3 1162.7,562.6 1190.0,564.1 C1217.3,565.6 1267.1,568.6 1323.7,571.7 C1380.3,574.9 1495.4,581.1 1529.7,583.0" fill="none" stroke="#ee6666" stroke-width="2" stroke-linejoin="round"/>
<text x="0" y="0" transform="translate(442.5,421) rotate(-90)" text-anchor="middle" font-size="16" fill="#6e7079">residuals</text>
<text x="1017" y="695.8" text-anchor="middle" font-size="16.6" fill="#6e7079">Pseudo Step</text>
<rect x="512" y="636.5" width="1021" height="7" fill="#dfe5f3"/>
<rect x="512" y="643.5" width="1021" height="29.5" fill="#e7edfc"/>
<path d="M512,673 L512,656.3 L522,657 L535,659.5 L550,661 L562,659.5 L576,657.1 L590,657.6 L603,659.6 L626,660.8 L650,662.5 L663,664 L681,665.5 L700,666.6 L1533,667.4 L1533,673 Z" fill="#d3e0fb"/>
<path d="M512,656.3 L522,657 L535,659.5 L550,661 L562,659.5 L576,657.1 L590,657.6 L603,659.6 L626,660.8 L650,662.5 L663,664 L681,665.5 L700,666.6 L1533,667.4" fill="none" stroke="#9db8f0" stroke-width="0.6"/>
<rect x="507.5" y="643.5" width="8" height="29" rx="2" fill="none" stroke="#d5dcea" stroke-width="1"/>
<rect x="509.5" y="648.5" width="7" height="18.5" rx="2" fill="#fff" stroke="#aeb6c6" stroke-width="1"/>
<line x1="512" y1="643" x2="512" y2="673" stroke="#b7c6e8" stroke-width="1"/>
<rect x="1528.5" y="648.5" width="6" height="18.5" rx="2" fill="#fff" stroke="#aeb6c6" stroke-width="1"/>
<line x1="1532.5" y1="643" x2="1532.5" y2="673" stroke="#b7c6e8" stroke-width="1"/>
<line x1="1020" y1="638" x2="1020" y2="642" stroke="#fff" stroke-width="1"/>
<line x1="1022.5" y1="638" x2="1022.5" y2="642" stroke="#fff" stroke-width="1"/>
<line x1="1025" y1="638" x2="1025" y2="642" stroke="#fff" stroke-width="1"/>
</svg>

<!-- statistics -->
<div class="card" style="left:315px;top:745px;width:1372px;height:154px"></div>
<div class="t" style="left:340px;top:779px;font-size:14.5px;font-weight:bold;color:#111">Statistics</div>
<div class="t" style="left:1471px;top:780.5px;font-size:11.7px;color:#6d7380">Forces averaged over last 10% steps</div>
<div class="t" style="left:340px;top:809px;font-size:13.4px;color:#333"><span style="color:#737985">CL:</span> 3.3727</div>
<div class="t" style="left:789px;top:809px;font-size:13.4px;color:#333"><span style="color:#737985">CD:</span> 1.0834</div>
<div class="t" style="left:340px;top:837px;font-size:13.4px;color:#333"><span style="color:#737985">CFx:</span> 1.0834</div>
<div class="t" style="left:789px;top:837px;font-size:13.4px;color:#333"><span style="color:#737985">CFy:</span> 0.0032</div>
<div class="t" style="left:1237px;top:837px;font-size:13.4px;color:#333"><span style="color:#737985">CFz:</span> 3.3727</div>
<div class="t" style="left:340px;top:865px;font-size:13.4px;color:#333"><span style="color:#737985">CMx:</span> 0.0242</div>
<div class="t" style="left:789px;top:865px;font-size:13.4px;color:#333"><span style="color:#737985">CMy:</span> -10.2108</div>
<div class="t" style="left:1237px;top:865px;font-size:13.4px;color:#333"><span style="color:#737985">CMz:</span> 0.0368</div>

<!-- chart cards -->
<div class="card" style="left:315px;top:911px;width:449px;height:340px"></div>
<div class="card" style="left:776px;top:911px;width:450px;height:340px"></div>
<div class="card" style="left:1238px;top:911px;width:449px;height:340px"></div>
<div class="t" style="left:342px;top:952px;font-size:17px;color:#444">CL</div>
<div class="t" style="left:803px;top:952px;font-size:17px;color:#444">CD</div>
<div class="t" style="left:1265px;top:952px;font-size:17px;color:#444">CMy</div>

<svg style="left:0;top:0" width="1702" height="1257" viewBox="0 0 1702 1257" font-family="Liberation Sans">
<line x1="433.5" y1="1016" x2="433.5" y2="1176.5" stroke="#eeeeee" stroke-width="1"/>
<line x1="467.5" y1="1016" x2="467.5" y2="1176.5" stroke="#eeeeee" stroke-width="1"/>
<line x1="502.5" y1="1016" x2="502.5" y2="1176.5" stroke="#eeeeee" stroke-width="1"/>
<line x1="536.5" y1="1016" x2="536.5" y2="1176.5" stroke="#eeeeee" stroke-width="1"/>
<line x1="570.5" y1="1016" x2="570.5" y2="1176.5" stroke="#eeeeee" stroke-width="1"/>
<line x1="604.5" y1="1016" x2="604.5" y2="1176.5" stroke="#eeeeee" stroke-width="1"/>
<line x1="638.5" y1="1016" x2="638.5" y2="1176.5" stroke="#eeeeee" stroke-width="1"/>
<line x1="672.5" y1="1016" x2="672.5" y2="1176.5" stroke="#eeeeee" stroke-width="1"/>
<line x1="707.5" y1="1016" x2="707.5" y2="1176.5" stroke="#eeeeee" stroke-width="1"/>
<line x1="399.6" y1="1021.5" x2="740.7" y2="1021.5" stroke="#eeeeee" stroke-width="1"/>
<line x1="399.6" y1="1076.5" x2="740.7" y2="1076.5" stroke="#eeeeee" stroke-width="1"/>
<line x1="399.6" y1="1132.5" x2="740.7" y2="1132.5" stroke="#eeeeee" stroke-width="1"/>
<line x1="425" y1="1016" x2="425" y2="1176.5" stroke="#1f77b4" stroke-width="2"/>
<line x1="427.5" y1="1016" x2="427.5" y2="1176.5" stroke="#1f77b4" stroke-width="2"/>
<line x1="430.5" y1="1016" x2="430.5" y2="1176.5" stroke="#1f77b4" stroke-width="2.5"/>
<line x1="433" y1="1016" x2="433" y2="1176.5" stroke="#1f77b4" stroke-width="2"/>
<line x1="438.5" y1="1016" x2="438.5" y2="1176.5" stroke="#1f77b4" stroke-width="2"/>
<line x1="441.5" y1="1016" x2="441.5" y2="1176.5" stroke="#1f77b4" stroke-width="2"/>
<line x1="444.5" y1="1016" x2="444.5" y2="1176.5" stroke="#1f77b4" stroke-width="2"/>
<line x1="448" y1="1016" x2="448" y2="1176.5" stroke="#1f77b4" stroke-width="2"/>
<line x1="451.5" y1="1016" x2="451.5" y2="1176.5" stroke="#1f77b4" stroke-width="2"/>
<line x1="453.5" y1="1016" x2="453.5" y2="1176.5" stroke="#1f77b4" stroke-width="2"/>
<line x1="457" y1="1016" x2="457" y2="1176.5" stroke="#1f77b4" stroke-width="2"/>
<line x1="459.5" y1="1016" x2="459.5" y2="1176.5" stroke="#1f77b4" stroke-width="2.5"/>
<line x1="462" y1="1016" x2="462" y2="1176.5" stroke="#1f77b4" stroke-width="2.5"/>
<line x1="464.5" y1="1016" x2="464.5" y2="1176.5" stroke="#1f77b4" stroke-width="2.5"/>
<line x1="466" y1="1016" x2="466" y2="1176.5" stroke="#1f77b4" stroke-width="2"/>
<path d="M480.0,1176.5 L480.0,1157.5 L481.5,1176.5" fill="none" stroke="#1f77b4" stroke-width="2" stroke-linejoin="round"/>
<path d="M483.5,1176.5 L483.9,1167.0 L484.5,1176.5" fill="none" stroke="#1f77b4" stroke-width="2" stroke-linejoin="round"/>
<path d="M490.5,1176.5 L492.0,1151.8 L493.4,1176.5 L496.3,1158.5 L499.1,1137.5 L501.0,1152.8 L503.0,1137.5 L505.8,1128.0 L507.7,1130.8 L510.6,1117.4 L515.4,1114.6 L517.3,1105.0 L521.2,1099.3 L523.0,1091.7" fill="none" stroke="#1f77b4" stroke-width="2" stroke-linejoin="round"/>
<path d="M523.0,1091.7 C525.1,1087.7 530.6,1075.6 535.4,1067.8 C540.2,1060.0 547.4,1051.1 551.7,1044.9 C556.0,1038.7 558.1,1034.3 561.2,1030.6 C564.3,1026.9 566.7,1022.8 570.2,1022.9 C573.7,1023.0 577.0,1025.1 582.2,1031.5 C587.4,1037.9 595.2,1052.2 601.3,1061.1 C607.3,1070.0 612.8,1077.7 618.5,1085.0 C624.2,1092.3 630.3,1099.3 635.7,1105.0 C641.1,1110.7 646.2,1114.8 651.0,1119.3 C655.8,1123.8 659.5,1128.0 664.3,1131.8 C669.1,1135.6 673.9,1139.0 679.6,1142.3 C685.3,1145.6 692.3,1148.8 698.7,1151.8 C705.1,1154.8 710.8,1157.6 717.8,1160.4 C724.8,1163.2 736.9,1167.1 740.7,1168.4" fill="none" stroke="#1f77b4" stroke-width="2" stroke-linejoin="round"/>
<rect x="679.3" y="1016" width="61.40000000000009" height="29" fill="#fff"/>
<line x1="685.3" y1="1030.5" x2="714.8" y2="1030.5" stroke="#1f77b4" stroke-width="2"/>
<text x="720.8" y="1035" font-size="13" fill="#444">CL</text>
<line x1="399.6" y1="1016" x2="399.6" y2="1177.0" stroke="#444" stroke-width="1.2"/>
<line x1="399.6" y1="1176.5" x2="740.7" y2="1176.5" stroke="#444" stroke-width="1.2"/>
<text x="392.40000000000003" y="1025.8" text-anchor="end" font-size="13" letter-spacing="0.8" fill="#444">3.5</text>
<text x="392.40000000000003" y="1081.0" text-anchor="end" font-size="13" letter-spacing="0.8" fill="#444">3.45</text>
<text x="392.40000000000003" y="1136.1" text-anchor="end" font-size="13" letter-spacing="0.8" fill="#444">3.4</text>
<text x="399.6" y="1196" text-anchor="middle" font-size="13" fill="#444">0</text>
<text x="433.8" y="1196" text-anchor="middle" font-size="13" fill="#444">200</text>
<text x="467.9" y="1196" text-anchor="middle" font-size="13" fill="#444">400</text>
<text x="502.1" y="1196" text-anchor="middle" font-size="13" fill="#444">600</text>
<text x="536.2" y="1196" text-anchor="middle" font-size="13" fill="#444">800</text>
<text x="570.4" y="1196" text-anchor="middle" font-size="13" fill="#444">1000</text>
<text x="604.6" y="1196" text-anchor="middle" font-size="13" fill="#444">1200</text>
<text x="638.7" y="1196" text-anchor="middle" font-size="13" fill="#444">1400</text>
<text x="672.9" y="1196" text-anchor="middle" font-size="13" fill="#444">1600</text>
<text x="707.0" y="1196" text-anchor="middle" font-size="13" fill="#444">1800</text>
<text x="570.4" y="1228.2" text-anchor="middle" font-size="16" fill="#444">pseudo step</text>
<text transform="translate(373.5,1096) rotate(-90)" text-anchor="middle" font-size="14" fill="#444">CL</text>
<line x1="894.5" y1="1016" x2="894.5" y2="1176.5" stroke="#eeeeee" stroke-width="1"/>
<line x1="929.5" y1="1016" x2="929.5" y2="1176.5" stroke="#eeeeee" stroke-width="1"/>
<line x1="963.5" y1="1016" x2="963.5" y2="1176.5" stroke="#eeeeee" stroke-width="1"/>
<line x1="997.5" y1="1016" x2="997.5" y2="1176.5" stroke="#eeeeee" stroke-width="1"/>
<line x1="1031.5" y1="1016" x2="1031.5" y2="1176.5" stroke="#eeeeee" stroke-width="1"/>
<line x1="1065.5" y1="1016" x2="1065.5" y2="1176.5" stroke="#eeeeee" stroke-width="1"/>
<line x1="1100.5" y1="1016" x2="1100.5" y2="1176.5" stroke="#eeeeee" stroke-width="1"/>
<line x1="1134.5" y1="1016" x2="1134.5" y2="1176.5" stroke="#eeeeee" stroke-width="1"/>
<line x1="1168.5" y1="1016" x2="1168.5" y2="1176.5" stroke="#eeeeee" stroke-width="1"/>
<line x1="860.6" y1="1039.5" x2="1202" y2="1039.5" stroke="#eeeeee" stroke-width="1"/>
<line x1="860.6" y1="1097.5" x2="1202" y2="1097.5" stroke="#eeeeee" stroke-width="1"/>
<line x1="860.6" y1="1157.5" x2="1202" y2="1157.5" stroke="#eeeeee" stroke-width="1"/>
<line x1="885.5" y1="1016" x2="885.5" y2="1176.5" stroke="#1f77b4" stroke-width="2"/>
<line x1="894.1" y1="1016" x2="894.1" y2="1176.5" stroke="#1f77b4" stroke-width="2"/>
<line x1="900.7" y1="1016" x2="900.7" y2="1176.5" stroke="#1f77b4" stroke-width="2"/>
<line x1="905.3" y1="1016" x2="905.3" y2="1176.5" stroke="#1f77b4" stroke-width="2"/>
<line x1="909.4" y1="1016" x2="909.4" y2="1176.5" stroke="#1f77b4" stroke-width="2"/>
<line x1="911.1" y1="1016" x2="911.1" y2="1176.5" stroke="#1f77b4" stroke-width="2"/>
<line x1="915" y1="1016" x2="915" y2="1176.5" stroke="#1f77b4" stroke-width="2"/>
<line x1="916.5" y1="1016" x2="916.5" y2="1176.5" stroke="#1f77b4" stroke-width="2"/>
<line x1="920.6" y1="1016" x2="920.6" y2="1176.5" stroke="#1f77b4" stroke-width="2"/>
<line x1="923.8" y1="1016" x2="923.8" y2="1168.8" stroke="#1f77b4" stroke-width="2"/>
<line x1="923.8" y1="1168.8" x2="928.7" y2="1016" stroke="#1f77b4" stroke-width="2"/>
<path d="M973.3,1016.2 C974.2,1019.6 976.4,1029.1 978.6,1036.3 C980.8,1043.5 983.1,1051.6 986.3,1059.2 C989.5,1066.8 993.2,1075.4 997.7,1082.1 C1002.2,1088.8 1007.3,1093.9 1013.0,1099.3 C1018.7,1104.7 1025.7,1110.0 1032.1,1114.6 C1038.5,1119.2 1044.2,1123.2 1051.2,1127.0 C1058.2,1130.8 1066.1,1134.2 1074.1,1137.5 C1082.0,1140.8 1090.9,1144.0 1098.9,1146.6 C1106.9,1149.2 1113.9,1151.1 1121.9,1153.3 C1129.9,1155.5 1138.8,1158.0 1146.7,1159.8 C1154.7,1161.6 1160.4,1162.7 1169.6,1164.2 C1178.8,1165.7 1196.6,1167.9 1202.0,1168.6" fill="none" stroke="#1f77b4" stroke-width="2" stroke-linejoin="round"/>
<rect x="1138.4" y="1016" width="63.59999999999991" height="29" fill="#fff"/>
<line x1="1144.4" y1="1030.5" x2="1173.9" y2="1030.5" stroke="#1f77b4" stroke-width="2"/>
<text x="1179.9" y="1035" font-size="13" fill="#444">CD</text>
<line x1="860.6" y1="1016" x2="860.6" y2="1177.0" stroke="#444" stroke-width="1.2"/>
<line x1="860.6" y1="1176.5" x2="1202" y2="1176.5" stroke="#444" stroke-width="1.2"/>
<text x="853.4" y="1043.9" text-anchor="end" font-size="13" letter-spacing="0.8" fill="#444">1.3</text>
<text x="853.4" y="1101.8" text-anchor="end" font-size="13" letter-spacing="0.8" fill="#444">1.2</text>
<text x="853.4" y="1161.2" text-anchor="end" font-size="13" letter-spacing="0.8" fill="#444">1.1</text>
<text x="860.6" y="1196" text-anchor="middle" font-size="13" fill="#444">0</text>
<text x="894.8" y="1196" text-anchor="middle" font-size="13" fill="#444">200</text>
<text x="929.0" y="1196" text-anchor="middle" font-size="13" fill="#444">400</text>
<text x="963.2" y="1196" text-anchor="middle" font-size="13" fill="#444">600</text>
<text x="997.4" y="1196" text-anchor="middle" font-size="13" fill="#444">800</text>
<text x="1031.6" y="1196" text-anchor="middle" font-size="13" fill="#444">1000</text>
<text x="1065.8" y="1196" text-anchor="middle" font-size="13" fill="#444">1200</text>
<text x="1100.0" y="1196" text-anchor="middle" font-size="13" fill="#444">1400</text>
<text x="1134.2" y="1196" text-anchor="middle" font-size="13" fill="#444">1600</text>
<text x="1168.4" y="1196" text-anchor="middle" font-size="13" fill="#444">1800</text>
<text x="1031.6" y="1228.2" text-anchor="middle" font-size="16" fill="#444">pseudo step</text>
<text transform="translate(818.5,1096) rotate(-90)" text-anchor="middle" font-size="14" fill="#444">CD</text>
<line x1="1356.5" y1="1016" x2="1356.5" y2="1176.5" stroke="#eeeeee" stroke-width="1"/>
<line x1="1391.5" y1="1016" x2="1391.5" y2="1176.5" stroke="#eeeeee" stroke-width="1"/>
<line x1="1425.5" y1="1016" x2="1425.5" y2="1176.5" stroke="#eeeeee" stroke-width="1"/>
<line x1="1459.5" y1="1016" x2="1459.5" y2="1176.5" stroke="#eeeeee" stroke-width="1"/>
<line x1="1493.5" y1="1016" x2="1493.5" y2="1176.5" stroke="#eeeeee" stroke-width="1"/>
<line x1="1528.5" y1="1016" x2="1528.5" y2="1176.5" stroke="#eeeeee" stroke-width="1"/>
<line x1="1562.5" y1="1016" x2="1562.5" y2="1176.5" stroke="#eeeeee" stroke-width="1"/>
<line x1="1596.5" y1="1016" x2="1596.5" y2="1176.5" stroke="#eeeeee" stroke-width="1"/>
<line x1="1630.5" y1="1016" x2="1630.5" y2="1176.5" stroke="#eeeeee" stroke-width="1"/>
<line x1="1322.7" y1="1027.5" x2="1664" y2="1027.5" stroke="#eeeeee" stroke-width="1"/>
<line x1="1322.7" y1="1064.5" x2="1664" y2="1064.5" stroke="#eeeeee" stroke-width="1"/>
<line x1="1322.7" y1="1101.5" x2="1664" y2="1101.5" stroke="#eeeeee" stroke-width="1"/>
<line x1="1322.7" y1="1139.5" x2="1664" y2="1139.5" stroke="#eeeeee" stroke-width="1"/>
<line x1="1346.9" y1="1016" x2="1346.9" y2="1176.5" stroke="#1f77b4" stroke-width="2"/>
<line x1="1356.9" y1="1016" x2="1356.9" y2="1176.5" stroke="#1f77b4" stroke-width="2"/>
<line x1="1363.1" y1="1016" x2="1363.1" y2="1176.5" stroke="#1f77b4" stroke-width="2"/>
<line x1="1368" y1="1016" x2="1368" y2="1176.5" stroke="#1f77b4" stroke-width="2"/>
<line x1="1371.8" y1="1016" x2="1371.8" y2="1176.5" stroke="#1f77b4" stroke-width="2"/>
<rect x="1374.1" y="1016" width="18.7" height="160.5" fill="#1f77b4"/>
<rect x="1392.8" y="1016" width="3.5" height="106.7" fill="#1f77b4"/>
<line x1="1379" y1="1016" x2="1379" y2="1176.5" stroke="#5a9bd0" stroke-width="0.6"/>
<line x1="1380.5" y1="1016" x2="1380.5" y2="1176.5" stroke="#5a9bd0" stroke-width="0.6"/>
<line x1="1390" y1="1016" x2="1390" y2="1176.5" stroke="#5a9bd0" stroke-width="0.6"/>
<line x1="1393.5" y1="1016" x2="1393.5" y2="1176.5" stroke="#5a9bd0" stroke-width="0.6"/>
<path d="M1398.4,1016.0 L1399.6,1049.3 L1401.0,1016.0 L1403.2,1111.7 L1405.0,1016.0 L1406.6,1099.8 L1407.2,1041.5 L1409.4,1064.9 L1411.8,1047.7 L1414.7,1084.0 L1417.0,1064.4 L1421.8,1091.2 L1423.8,1078.5 L1427.0,1092.7 L1430.5,1091.9 L1434.3,1101.2 L1438.1,1102.2 L1440.0,1108.8 L1443.9,1112.7 L1446.7,1118.4" fill="none" stroke="#1f77b4" stroke-width="2" stroke-linejoin="round"/>
<path d="M1446.7,1118.4 C1448.6,1120.6 1453.1,1125.6 1458.2,1131.8 C1463.3,1138.0 1472.8,1150.2 1477.3,1155.6 C1481.8,1161.0 1482.4,1162.1 1484.9,1164.2 C1487.5,1166.3 1489.7,1168.4 1492.6,1168.4 C1495.5,1168.4 1498.3,1167.1 1502.1,1164.2 C1505.9,1161.3 1508.8,1159.9 1515.5,1150.8 C1522.2,1141.7 1534.6,1120.3 1542.2,1109.8 C1549.8,1099.3 1555.2,1094.0 1561.3,1087.8 C1567.3,1081.6 1572.8,1077.4 1578.5,1072.6 C1584.2,1067.8 1588.7,1063.8 1595.7,1059.2 C1602.7,1054.6 1616.4,1047.3 1620.5,1044.9" fill="none" stroke="#1f77b4" stroke-width="2" stroke-linejoin="round"/>
<rect x="1591.2" y="1016" width="72.79999999999995" height="29" fill="#fff"/>
<line x1="1597.2" y1="1030.5" x2="1626.7" y2="1030.5" stroke="#1f77b4" stroke-width="2"/>
<text x="1632.7" y="1035" font-size="13" fill="#444">CMy</text>
<line x1="1322.7" y1="1016" x2="1322.7" y2="1177.0" stroke="#444" stroke-width="1.2"/>
<line x1="1322.7" y1="1176.5" x2="1664" y2="1176.5" stroke="#444" stroke-width="1.2"/>
<text x="1315.5" y="1031.8" text-anchor="end" font-size="13" letter-spacing="0.8" fill="#444">−10.2</text>
<text x="1315.5" y="1068.9" text-anchor="end" font-size="13" letter-spacing="0.8" fill="#444">−10.3</text>
<text x="1315.5" y="1105.9" text-anchor="end" font-size="13" letter-spacing="0.8" fill="#444">−10.4</text>
<text x="1315.5" y="1143.6" text-anchor="end" font-size="13" letter-spacing="0.8" fill="#444">−10.5</text>
<text x="1322.7" y="1196" text-anchor="middle" font-size="13" fill="#444">0</text>
<text x="1356.9" y="1196" text-anchor="middle" font-size="13" fill="#444">200</text>
<text x="1391.2" y="1196" text-anchor="middle" font-size="13" fill="#444">400</text>
<text x="1425.4" y="1196" text-anchor="middle" font-size="13" fill="#444">600</text>
<text x="1459.7" y="1196" text-anchor="middle" font-size="13" fill="#444">800</text>
<text x="1493.9" y="1196" text-anchor="middle" font-size="13" fill="#444">1000</text>
<text x="1528.1" y="1196" text-anchor="middle" font-size="13" fill="#444">1200</text>
<text x="1562.4" y="1196" text-anchor="middle" font-size="13" fill="#444">1400</text>
<text x="1596.6" y="1196" text-anchor="middle" font-size="13" fill="#444">1600</text>
<text x="1630.9" y="1196" text-anchor="middle" font-size="13" fill="#444">1800</text>
<text x="1493.9" y="1228.2" text-anchor="middle" font-size="16" fill="#444">pseudo step</text>
<text transform="translate(1280.5,1096) rotate(-90)" text-anchor="middle" font-size="14" fill="#444">CMy</text>
</svg>

<!-- bottom bar -->
<div class="a" style="left:298px;top:1240px;width:1404px;height:17px;background:#fff;border-top:1px solid #dfe1e6"></div>
<svg style="left:316px;top:1244px" width="200" height="13" viewBox="316 1244 200 13">
 <path d="M321.5,1260 L321.5,1252.3 C321.5,1251.6 322,1251.1 322.7,1251.1 L328.3,1251.1 L331.5,1254.3 L331.5,1260" fill="none" stroke="#2b2f36" stroke-width="1.4"/>
 <circle cx="326.5" cy="1257.6" r="2" fill="none" stroke="#2b2f36" stroke-width="1.3"/>
 <circle cx="454.5" cy="1257.3" r="7.2" fill="none" stroke="#1fb3a0" stroke-width="1.5"/>
 <path d="M451,1257.5 L453.5,1260" fill="none" stroke="#1fb3a0" stroke-width="1.5"/>
</svg>
<div class="t" style="left:339px;top:1249.8px;font-size:13.5px;color:#2b2f36">Inspector</div>
<div class="a" style="left:400px;top:1249px;width:22px;height:17px;border-radius:8px;background:#f1f2f4"></div>
<div class="t" style="left:408px;top:1253px;font-size:11px;color:#555">0</div>
<div class="t" style="left:467.5px;top:1249.8px;font-size:13.5px;color:#2b2f36">Run status</div>
</body></html>
